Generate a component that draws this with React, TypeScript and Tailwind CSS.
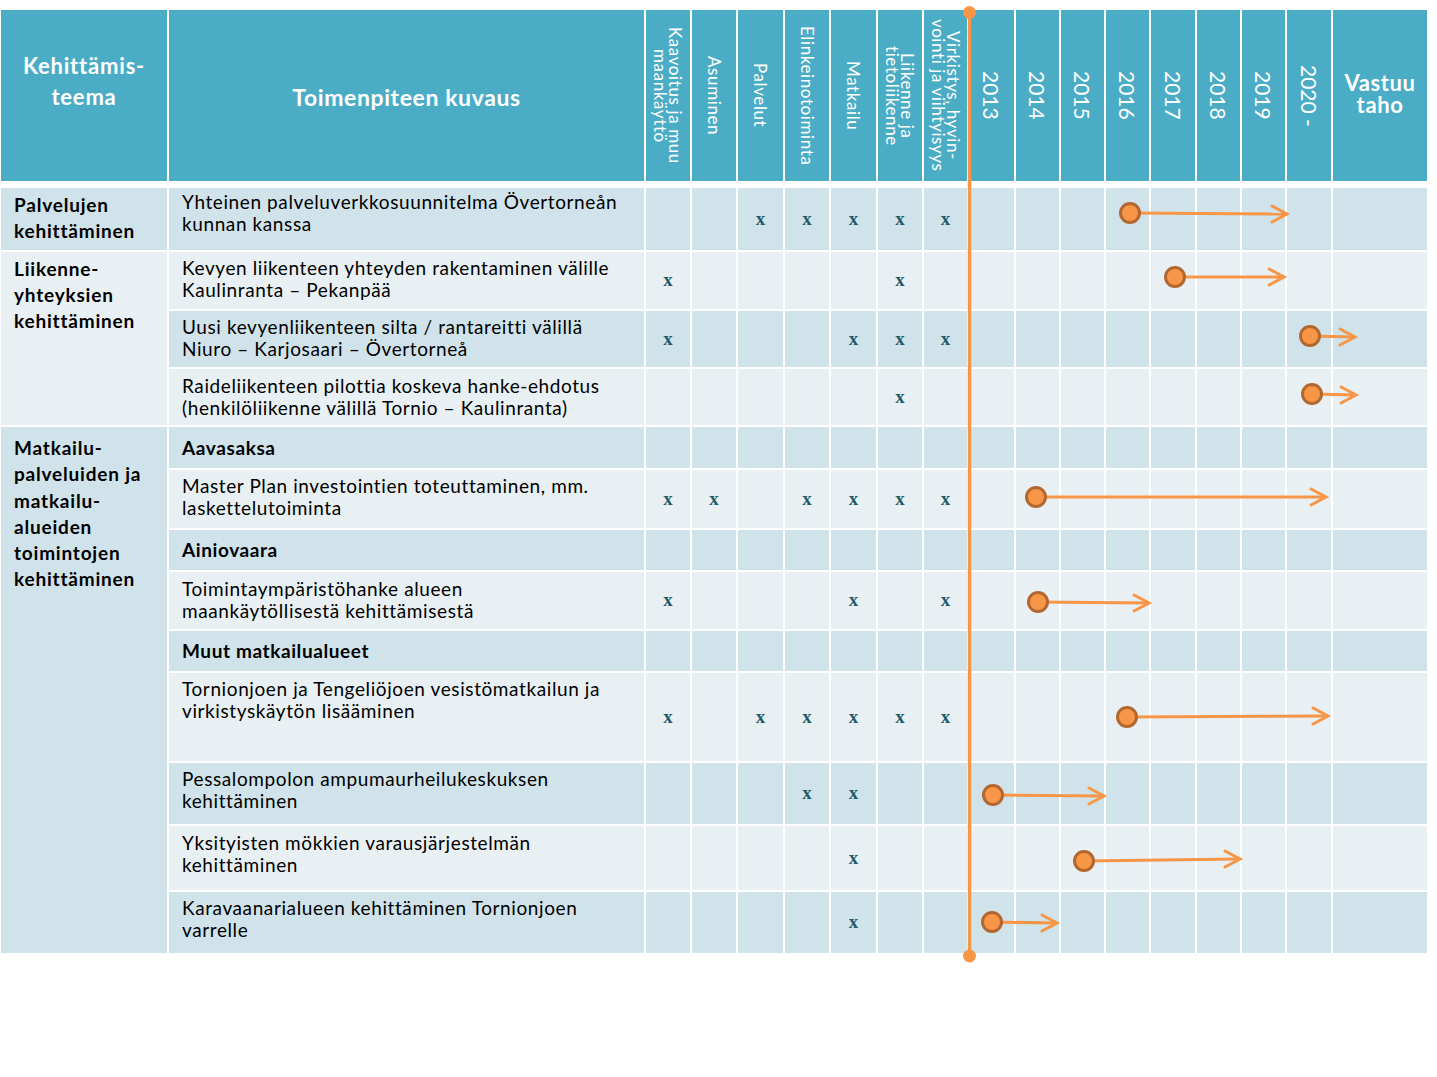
import React from "react";

type Row = {
  lines: string[];
  bold?: boolean;
  dark: boolean;
  marks: number[];
  pt: string;
};

const rows: Row[] = [
  { lines: ["Yhteinen palveluverkkosuunnitelma Övertorneån", "kunnan kanssa"], dark: true, marks: [2, 3, 4, 5, 6], pt: "pt-[3px]" },
  { lines: ["Kevyen liikenteen yhteyden rakentaminen välille", "Kaulinranta – Pekanpää"], dark: false, marks: [0, 5], pt: "pt-[5px]" },
  { lines: ["Uusi kevyenliikenteen silta / rantareitti  välillä", "Niuro – Karjosaari – Övertorneå"], dark: true, marks: [0, 4, 5, 6], pt: "pt-[5px]" },
  { lines: ["Raideliikenteen pilottia koskeva hanke-ehdotus", "(henkilöliikenne välillä Tornio – Kaulinranta)"], dark: false, marks: [5], pt: "pt-[6px]" },
  { lines: ["Aavasaksa"], bold: true, dark: true, marks: [], pt: "" },
  { lines: ["Master Plan investointien toteuttaminen, mm.", "laskettelutoiminta"], dark: false, marks: [0, 1, 3, 4, 5, 6], pt: "pt-[5px]" },
  { lines: ["Ainiovaara"], bold: true, dark: true, marks: [], pt: "" },
  { lines: ["Toimintaympäristöhanke alueen", "maankäytöllisestä kehittämisestä"], dark: false, marks: [0, 4, 6], pt: "pt-[6px]" },
  { lines: ["Muut matkailualueet"], bold: true, dark: true, marks: [], pt: "" },
  { lines: ["Tornionjoen ja Tengeliöjoen vesistömatkailun ja", "virkistyskäytön lisääminen"], dark: false, marks: [0, 2, 3, 4, 5, 6], pt: "pt-[5px]" },
  { lines: ["Pessalompolon ampumaurheilukeskuksen", "kehittäminen"], dark: true, marks: [3, 4], pt: "pt-[5px]" },
  { lines: ["Yksityisten mökkien varausjärjestelmän", "kehittäminen"], dark: false, marks: [4], pt: "pt-[6px]" },
  { lines: ["Karavaanarialueen kehittäminen Tornionjoen", "varrelle"], dark: true, marks: [4], pt: "pt-[5px]" },
];

const DARK = "bg-[#d0e3ea]";
const LIGHT = "bg-[#e8f0f4]";
const GRID_COLS =
  "grid grid-cols-[166px_475px_44px_44px_45px_44px_45px_44px_43px_45px_43px_43px_43px_44px_43px_43px_44px_94px] gap-x-[2px]";

const categories: React.ReactNode[] = [
  <>Kaavoitus ja muu<br />maankäyttö</>,
  <>Asuminen</>,
  <>Palvelut</>,
  <>Elinkeinotoiminta</>,
  <>Matkailu</>,
  <>Liikenne ja<br />tietoliikenne</>,
  <>Virkistys, hyvin-<br />vointi ja viihtyisyys</>,
];
const years = ["2013", "2014", "2015", "2016", "2017", "2018", "2019", "2020 -"];

type Arrow = { cx: number; cy: number; tx: number; ty: number };
const arrows: Arrow[] = [
  { cx: 1130, cy: 213, tx: 1287, ty: 214 },
  { cx: 1175, cy: 277, tx: 1284, ty: 277 },
  { cx: 1310, cy: 336, tx: 1355, ty: 337 },
  { cx: 1312, cy: 394, tx: 1356, ty: 395 },
  { cx: 1036, cy: 497, tx: 1326, ty: 497 },
  { cx: 1038, cy: 602, tx: 1149, ty: 603 },
  { cx: 1127, cy: 717, tx: 1328, ty: 716 },
  { cx: 993, cy: 795, tx: 1104, ty: 796 },
  { cx: 1084, cy: 861, tx: 1240, ty: 859 },
  { cx: 992, cy: 922, tx: 1057, ty: 923 },
];

function Overlay() {
  const orange = "#f79646";
  return (
    <svg
      className="absolute left-0 top-0 pointer-events-none"
      width={1437}
      height={970}
      viewBox="0 0 1437 970"
    >
      <line x1={969.5} y1={12} x2={969.5} y2={956} stroke={orange} strokeWidth={3.5} />
      <circle cx={969.5} cy={12.5} r={6.5} fill={orange} />
      <circle cx={969.5} cy={956} r={6.5} fill={orange} />
      {arrows.map((a, i) => (
        <g key={i}>
          <line x1={a.cx} y1={a.cy} x2={a.tx - 1} y2={a.ty} stroke={orange} strokeWidth={3} />
          <polyline
            points={`${a.tx - 15},${a.ty - 8} ${a.tx},${a.ty} ${a.tx - 15},${a.ty + 8}`}
            fill="none"
            stroke={orange}
            strokeWidth={3}
            strokeLinecap="round"
            strokeLinejoin="miter"
          />
          <circle cx={a.cx} cy={a.cy} r={9.5} fill={orange} stroke="#b2672e" strokeWidth={3} />
        </g>
      ))}
    </svg>
  );
}

function Header() {
  return (
    <div className={`${GRID_COLS} h-[171px] text-white`}>
      <div className="bg-[#4bacc6] flex items-center justify-center text-center font-bold text-[22px] tracking-[0.8px] leading-[31px] pb-[29px]">
        Kehittämis-
        <br />
        teema
      </div>
      <div className="bg-[#4bacc6] flex items-center justify-center font-bold text-[23px] tracking-[0.6px] pt-[3px]">
        Toimenpiteen kuvaus
      </div>
      {categories.map((c, i) => (
        <div key={i} className="bg-[#4bacc6] flex items-center justify-center">
          <div className="[writing-mode:vertical-rl] text-center text-[17px] tracking-[0.6px] leading-[15px] whitespace-nowrap">
            {c}
          </div>
        </div>
      ))}
      {years.map((y) => (
        <div key={y} className="bg-[#4bacc6] flex items-center justify-center">
          <div className="[writing-mode:vertical-rl] text-[21px] leading-[21px] whitespace-nowrap">{y}</div>
        </div>
      ))}
      <div className="bg-[#4bacc6] flex items-center justify-center text-center font-bold text-[22px] tracking-[0.6px] leading-[22px] pb-[3px]">
        Vastuu
        <br />
        taho
      </div>
    </div>
  );
}

function Body() {
  const cells: React.ReactNode[] = [];
  const col1 = "pl-[13px] font-bold text-[19px] tracking-[0.8px] text-black whitespace-nowrap";
  rows.forEach((r, ri) => {
    const bg = r.dark ? DARK : LIGHT;
    if (ri === 0) {
      cells.push(
        <div key="t0" className={`${DARK} ${col1} pt-[4px] leading-[26px]`}>
          Palvelujen
          <br />
          kehittäminen
        </div>
      );
    } else if (ri === 1) {
      cells.push(
        <div key="t1" className={`${LIGHT} ${col1} row-span-3 pt-[4px] leading-[26px]`}>
          Liikenne-
          <br />
          yhteyksien
          <br />
          kehittäminen
        </div>
      );
    } else if (ri === 4) {
      cells.push(
        <div key="t2" className={`${DARK} ${col1} row-span-9 pt-[8px] leading-[26.3px]`}>
          Matkailu-
          <br />
          palveluiden ja
          <br />
          matkailu-
          <br />
          alueiden
          <br />
          toimintojen
          <br />
          kehittäminen
        </div>
      );
    }
    cells.push(
      <div
        key={`d${ri}`}
        className={`${bg} pl-[13px] text-[19px] tracking-[0.6px] leading-[21.5px] text-black whitespace-nowrap ${
          r.bold ? "font-bold flex items-center" : r.pt
        }`}
      >
        {r.lines.map((l, li) => (
          <React.Fragment key={li}>
            {li > 0 && <br />}
            {l}
          </React.Fragment>
        ))}
      </div>
    );
    for (let c = 0; c < 7; c++) {
      cells.push(
        <div key={`m${ri}-${c}`} className={`${bg} flex items-center justify-center`}>
          {r.marks.includes(c) && (
            <span className="[font-family:'Liberation_Serif',serif] font-bold text-[19px] leading-none text-[#1f5a6a] -mt-[2px]">
              x
            </span>
          )}
        </div>
      );
    }
    for (let c = 0; c < 9; c++) {
      cells.push(<div key={`y${ri}-${c}`} className={bg} />);
    }
  });
  return (
    <div
      className={`${GRID_COLS} gap-y-[2px] mt-[7px] grid-rows-[62px_57px_56px_56px_41px_58px_40px_57px_40px_88px_61px_64px_61px]`}
    >
      {cells}
    </div>
  );
}

export default function App() {
  return (
    <div className="w-[1437px] h-[1077px] bg-white [font-family:Lato,'Noto_Sans',sans-serif] overflow-hidden">
      <div className="relative">
        <div className="pt-[10px] pl-[1px]">
          <Header />
          <Body />
        </div>
        <Overlay />
      </div>
    </div>
  );
}
